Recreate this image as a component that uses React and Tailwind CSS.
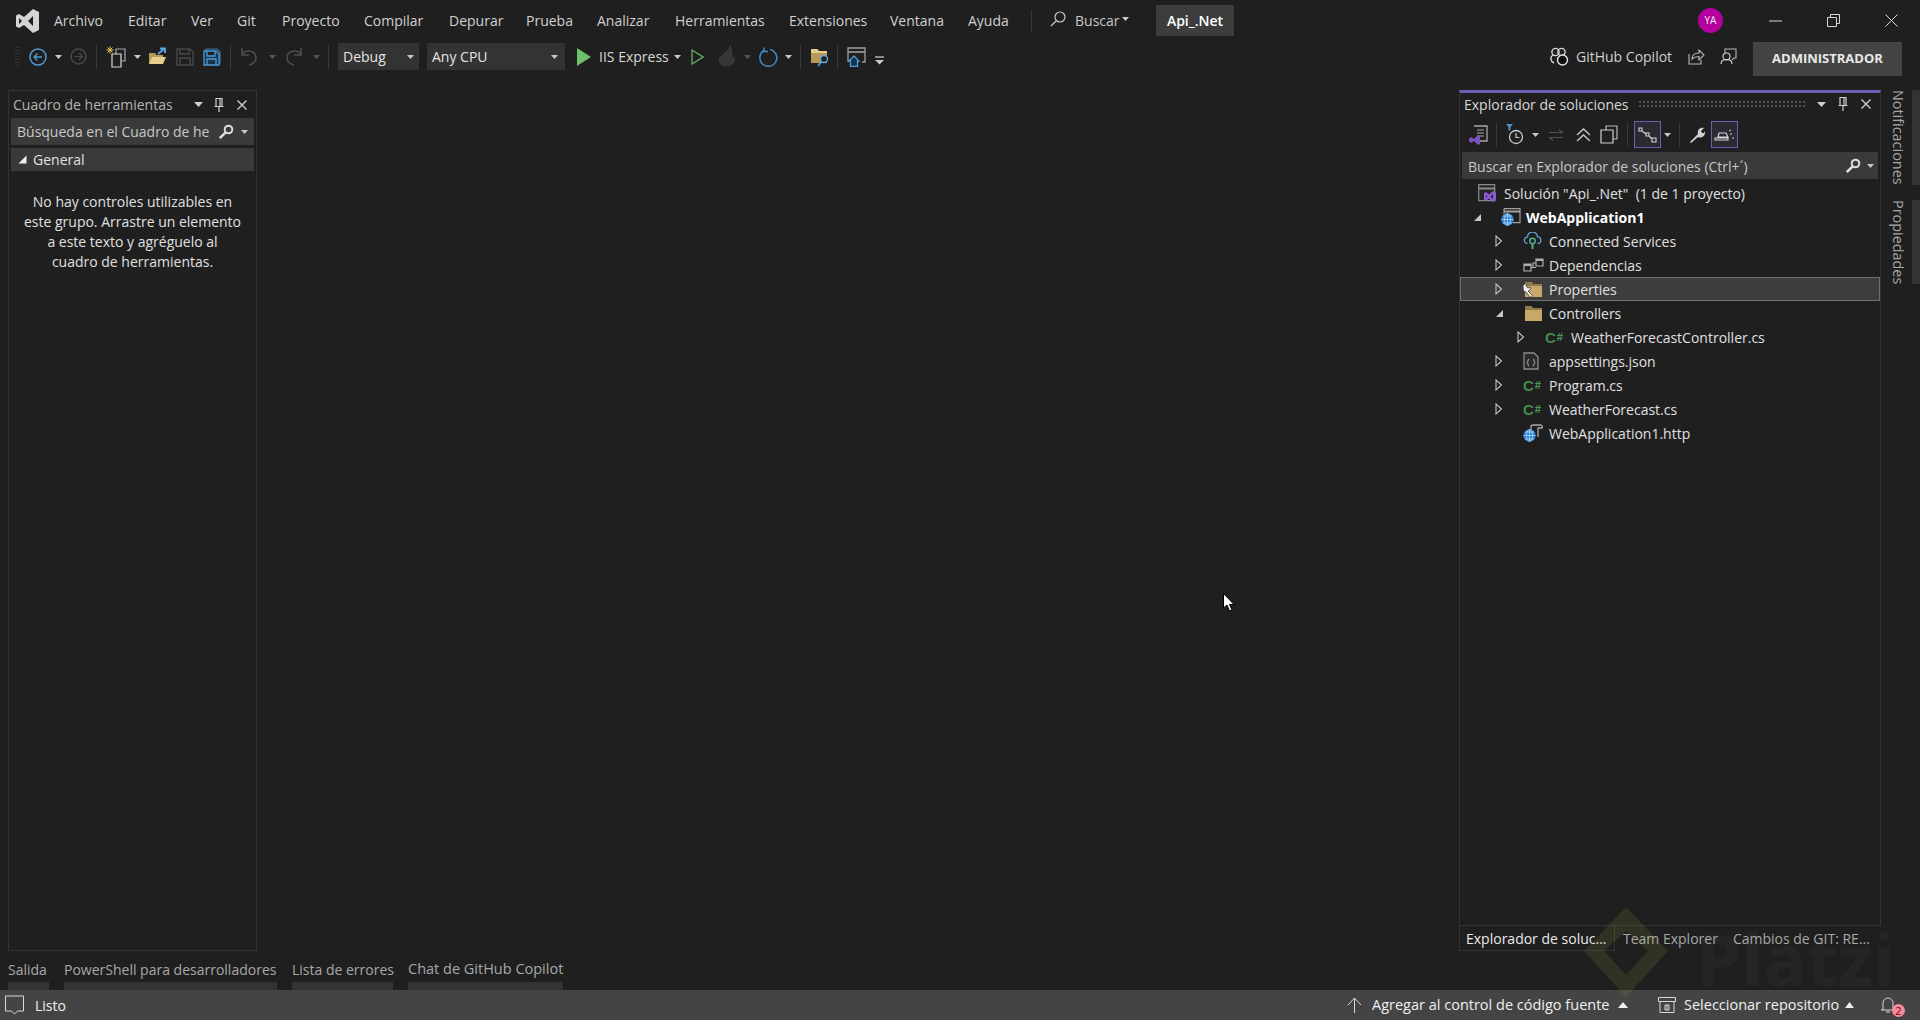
const menuItems = [
  ['Archivo', 'w-[74px]'],
  ['Editar', 'w-[63px]'],
  ['Ver', 'w-[46px]'],
  ['Git', 'w-[45px]'],
  ['Proyecto', 'w-[82px]'],
  ['Compilar', 'w-[85px]'],
  ['Depurar', 'w-[77px]'],
  ['Prueba', 'w-[71px]'],
  ['Analizar', 'w-[78px]'],
  ['Herramientas', 'w-[114px]'],
  ['Extensiones', 'w-[101px]'],
  ['Ventana', 'w-[78px]'],
  ['Ayuda', 'w-[70px]']
]

const outputTabs = [
  { label: 'Salida', w: 'w-[41px]', text: 'text-[14px]' },
  { label: 'PowerShell para desarrolladores', w: 'w-[213px]', text: 'text-[14px]' },
  { label: 'Lista de errores', w: 'w-[101px]', text: 'text-[14px]' },
  { label: 'Chat de GitHub Copilot', w: 'w-[155px]', text: 'text-[14.5px]' }
]

function Caret({ className = '', color = '#c8c8c8' }) {
  return (
    <svg width="7" height="4" viewBox="0 0 7 4" className={`shrink-0 ${className}`}>
      <path d="M0 0h7L3.500 4Z" fill={color} />
    </svg>
  )
}

function Sep({ className = '' }) {
  return <span className={`w-px h-[24px] bg-[#3a3a3a] shrink-0 ${className}`} />
}

function CloseX({ className = '' }) {
  return (
    <svg width="10" height="10" viewBox="0 0 10 10" className={className}>
      <path d="M0.5 0.5 9.5 9.5M9.5 0.5 0.5 9.5" stroke="#d0d0d0" strokeWidth="1.4" />
    </svg>
  )
}

function Pin({ className = '' }) {
  return (
    <svg width="10" height="14" viewBox="0 0 10 14" className={className}>
      <path d="M2 .5h6v8H2zM.5 8.500h9M5 8.500V14M6 1v7" fill="none" stroke="#d0d0d0" strokeWidth="1.2" />
    </svg>
  )
}

function DropDown({ className = '' }) {
  return (
    <svg width="9" height="5" viewBox="0 0 9 5" className={className}>
      <path d="M0 0h9L4.500 5Z" fill="#d0d0d0" />
    </svg>
  )
}

function SearchGlyph({ className = '' }) {
  return (
    <svg width="16" height="16" viewBox="0 0 16 16" className={className}>
      <circle cx="10.500" cy="5.500" r="3.800" fill="none" stroke="#dedede" strokeWidth="2" />
      <path d="M7.700 8.300 1.800 14.200" stroke="#dedede" strokeWidth="2.600" />
    </svg>
  )
}

function Expander({ open }) {
  if (open) {
    return (
      <svg width="9" height="9" viewBox="0 0 9 9">
        <path d="M8 1V8H1Z" fill="#c8c8c8" />
      </svg>
    )
  }
  return (
    <svg width="8" height="12" viewBox="0 0 8 12">
      <path d="M1 1 6.500 6 1 11Z" fill="none" stroke="#c0c0c0" strokeWidth="1.100" />
    </svg>
  )
}

function CSharp() {
  return (
    <span className="font-['Liberation_Sans',sans-serif] text-[15px] font-bold text-[#3f8f4c] tracking-[1px] leading-none">
      C<span className="text-[11px] align-[2px] text-[#4e9a58]">#</span>
    </span>
  )
}

function FolderIcon({ wrench }) {
  return (
    <svg width="20" height="18" viewBox="0 0 20 18">
      <path d="M2 2h6l2 2h9v13H2Z" fill="#c8a868" />
      <path d="M2 2h6l2 2h9v2H2Z" fill="#8f7a4c" />
      {wrench && <path d="M0 7c0-2 2-4 4-3L3 6l2 2 2-1c1 2 0 4-2 4l4 4c1 1-1 3-2 2l-4-5C1 12 0 10 0 7Z" fill="#ececec" stroke="#2a2a2a" strokeWidth=".7" />}
    </svg>
  )
}

function GlobeBadge({ className = '' }) {
  return (
    <svg width="13" height="13" viewBox="0 0 13 13" className={className}>
      <circle cx="6.500" cy="6.500" r="6.200" fill="#2a80cf" />
      <path d="M.5 6.500h12M6.500.5v12M2 3h9M2 10h9" stroke="#bfe0fa" strokeWidth=".7" />
      <ellipse cx="6.500" cy="6.500" rx="3" ry="6" fill="none" stroke="#bfe0fa" strokeWidth=".7" />
    </svg>
  )
}

function TreeIcon({ kind }) {
  if (kind === 'solution') {
    return (
      <svg width="19" height="18" viewBox="0 0 19 18">
        <path d="M.7.7h16v16H.7z" fill="#262626" stroke="#8a8a8a" strokeWidth="1.200" />
        <path d="M1 4.500h16" stroke="#8a8a8a" strokeWidth="2" />
        <path d="M6 9l2-1 3 2.500L15 7l3 1.500v8L15 18l-4-3.500L8 17l-2-1Zm2 2.500v2l1.500-1Zm7-1.500-2.500 2.500L15 15Z" fill="#8a5bd1" />
      </svg>
    )
  }
  if (kind === 'project') {
    return (
      <span className="relative inline-block w-[20px] h-[18px]">
        <svg width="20" height="16" viewBox="0 0 20 16" className="absolute left-0 top-0">
          <path d="M3 .7h16v14H12M3 6V.7" fill="none" stroke="#a0a0a0" strokeWidth="1.200" />
          <path d="M3 3.500h16" stroke="#a0a0a0" strokeWidth="2" />
        </svg>
        <GlobeBadge className="absolute left-0 bottom-0" />
      </span>
    )
  }
  if (kind === 'connected') {
    return (
      <svg width="19" height="18" viewBox="0 0 19 18">
        <path d="M4.500 11.500a3.200 3.200 0 0 1 0-6.400 5 5 0 0 1 10-.2 3.300 3.300 0 0 1 0 6.600" fill="none" stroke="#5a9ccc" strokeWidth="1.400" />
        <circle cx="9.500" cy="9" r="2.700" fill="none" stroke="#4eb089" strokeWidth="1.500" />
        <path d="M9.500 12v5" stroke="#4eb089" strokeWidth="2" />
      </svg>
    )
  }
  if (kind === 'deps') {
    return (
      <svg width="21" height="15" viewBox="0 0 21 15">
        <path d="M1 6h7v7H1zM13 1h7v7h-7zM8 9.500h5M13 5H10v4" fill="none" stroke="#b0b0b0" strokeWidth="1.200" />
        <path d="M13 1h7v2h-7zM1 6h7v2H1z" fill="#b0b0b0" />
      </svg>
    )
  }
  if (kind === 'properties') return <FolderIcon wrench />
  if (kind === 'folder') return <FolderIcon />
  if (kind === 'cs') return <CSharp />
  if (kind === 'json') {
    return (
      <svg width="16" height="18" viewBox="0 0 16 18">
        <path d="M1 1h10l4 4v12H1Z" fill="#2a2a2a" stroke="#8a8a8a" strokeWidth="1.300" />
        <path d="M6 7C4.500 7 5.500 10 4 10.500 5.500 11 4.500 14 6 14M10 7c1.500 0 .5 3 2 3.500-1.500.5-.5 3.500-2 3.500" fill="none" stroke="#c0c0c0" strokeWidth="1" />
      </svg>
    )
  }
  if (kind === 'http') {
    return (
      <span className="relative inline-block w-[20px] h-[18px]">
        <svg width="16" height="14" viewBox="0 0 16 14" className="absolute right-0 top-0">
          <path d="M4 13V3a2 2 0 0 1 2-2h8a2 2 0 0 1 1 3h-4v9" fill="none" stroke="#a8a8a8" strokeWidth="1.300" />
        </svg>
        <GlobeBadge className="absolute left-0 bottom-0" />
      </span>
    )
  }
  return null
}

const treeRows = [
  { label: 'Solución "Api_.Net"  (1 de 1 proyecto)', icon: 'solution', pad: 'pl-[18px]', slot: 'w-[26px]' },
  { label: 'WebApplication1', icon: 'project', pad: 'pl-[13px]', exp: 'open', bold: true },
  { label: 'Connected Services', icon: 'connected', pad: 'pl-[35px]', exp: 'closed', slot: 'w-[26px]' },
  { label: 'Dependencias', icon: 'deps', pad: 'pl-[35px]', exp: 'closed', slot: 'w-[26px]' },
  { label: 'Properties', icon: 'properties', pad: 'pl-[35px]', exp: 'closed', selected: true, slot: 'w-[26px]' },
  { label: 'Controllers', icon: 'folder', pad: 'pl-[35px]', exp: 'open', slot: 'w-[26px]' },
  { label: 'WeatherForecastController.cs', icon: 'cs', pad: 'pl-[57px]', exp: 'closed', slot: 'w-[26px]' },
  { label: 'appsettings.json', icon: 'json', pad: 'pl-[35px]', exp: 'closed', slot: 'w-[26px]' },
  { label: 'Program.cs', icon: 'cs', pad: 'pl-[35px]', exp: 'closed', slot: 'w-[26px]' },
  { label: 'WeatherForecast.cs', icon: 'cs', pad: 'pl-[35px]', exp: 'closed', slot: 'w-[26px]' },
  { label: 'WebApplication1.http', icon: 'http', pad: 'pl-[35px]', slot: 'w-[26px]' }
]

function TreeRow({ row }) {
  return (
    <div className={`h-6 flex items-center whitespace-pre ${row.pad} ${row.selected ? 'bg-[#3d3d3d] outline outline-1 -outline-offset-1 outline-[#707070]' : ''}`}>
      {row.icon !== 'solution' && (
        <span className="w-[28px] flex items-center">
          {row.exp === 'open' && <Expander open />}
          {row.exp === 'closed' && <Expander />}
        </span>
      )}
      <span className={`${row.slot || 'w-[25px]'} flex items-center`}>
        <TreeIcon kind={row.icon} />
      </span>
      <span className={row.bold ? 'font-bold text-white' : 'text-[#e0e0e0]'}>{row.label}</span>
    </div>
  )
}

function TitleBar() {
  return (
    <div className="h-[41px] flex items-center shrink-0">
      <svg width="26" height="26" viewBox="0 0 26 26" className="ml-[14px] mr-[14px]">
        <path d="M19 1 25 4v18l-6 3-9-8-5 3-3-1.500V7.500L5 6l5 3Zm0 7-5 5 5 5ZM5 10v6l3-3Z" fill="#d4d4d4" />
      </svg>
      {menuItems.map(([name, w]) => (
        <span key={name} className={`${w} text-[#d0d0d0]`}>{name}</span>
      ))}
      <span className="w-px h-[22px] bg-[#3a3a3a] -ml-[7px]" />
      <svg width="16" height="16" viewBox="0 0 16 16" className="ml-[18px] mb-[3px]">
        <circle cx="10" cy="6" r="5" fill="none" stroke="#c8c8c8" strokeWidth="1.200" />
        <path d="M6.500 9.500 1 15" stroke="#c8c8c8" strokeWidth="1.200" />
      </svg>
      <span className="ml-[9px] w-[43px] text-[#c8c8c8]">Buscar</span>
      <Caret className="ml-[4px] mb-[3px]" />
      <span className="ml-[27px] w-[78px] h-[31px] flex items-center justify-center bg-[#3d3d3d] text-white font-semibold text-[14px]">Api_.Net</span>
      <span className="ml-auto w-[25px] h-[25px] rounded-full bg-[#b4009e] text-[#f0f0f0] text-[10px] flex items-center justify-center">YA</span>
      <svg width="13" height="2" viewBox="0 0 13 2" className="ml-[46px]"><path d="M0 1h13" stroke="#d8d8d8" /></svg>
      <svg width="13" height="13" viewBox="0 0 13 13" className="ml-[45px]">
        <path d="M.5 3.500h9v9h-9zM3.500 3.500v-3h9v9h-3" fill="none" stroke="#d8d8d8" />
      </svg>
      <svg width="13" height="13" viewBox="0 0 13 13" className="ml-[45px] mr-[22px]">
        <path d="M.5.500l12 12M12.500.500l-12 12" stroke="#d8d8d8" />
      </svg>
    </div>
  )
}

function Toolbar() {
  return (
    <div className="h-[32px] pb-[1px] flex items-center shrink-0">
      <svg width="5" height="24" viewBox="0 0 5 24" className="ml-[15px]">
        <path d="M1 2v21M4 2v21" stroke="#4a4a4a" strokeDasharray="1 2" />
      </svg>
      <svg width="18" height="18" viewBox="0 0 18 18" className="ml-[9px]">
        <circle cx="9" cy="9" r="8" fill="none" stroke="#4f9bd4" strokeWidth="1.500" />
        <path d="M13 9H5.500M8.500 5.500 5 9l3.500 3.500" fill="none" stroke="#4f9bd4" strokeWidth="1.300" />
      </svg>
      <Caret className="ml-[8px]" />
      <svg width="17" height="17" viewBox="0 0 17 17" className="ml-[8px]">
        <circle cx="8.500" cy="8.500" r="7.500" fill="none" stroke="#4a4a4a" strokeWidth="1.400" />
        <path d="M4.500 8.500h7.500M9 5l3.500 3.500L9 12" fill="none" stroke="#4a4a4a" strokeWidth="1.200" />
      </svg>
      <Sep className="ml-[9px]" />
      <svg width="20" height="22" viewBox="0 0 20 22" className="ml-[9px]">
        <path d="M4 .5v7M.5 4h7M1.500 1.500l5 5M6.500 1.500l-5 5" stroke="#e0c050" strokeWidth="1" />
        <path d="M10 3h9v12h-9z" fill="none" stroke="#a8a8a8" strokeWidth="1.200" />
        <path d="M6 8h9v13H6z" fill="#1f1f1f" stroke="#d8d8d8" strokeWidth="1.200" />
      </svg>
      <Caret className="ml-[8px]" />
      <svg width="19" height="19" viewBox="0 0 19 19" className="ml-[7px]">
        <path d="M1 6h6l1.500 2H15v9H1Z" fill="#b89a58" />
        <path d="M1 17 4 10h14l-3 7Z" fill="#e6cd8c" />
        <path d="M10 7 16 2M12 1.500h5V6" fill="none" stroke="#5aa7de" strokeWidth="1.800" />
      </svg>
      <svg width="18" height="18" viewBox="0 0 18 18" className="ml-[9px]">
        <path d="M1 1h13l3 3v13H1ZM4 1v5h9V1M4 17v-7h10v7" fill="none" stroke="#4a4a4a" strokeWidth="1.300" />
      </svg>
      <svg width="18" height="18" viewBox="0 0 18 18" className="ml-[9px]">
        <path d="M3 3V1h11l3 3v11h-1" fill="none" stroke="#3a78a8" strokeWidth="1.200" />
        <path d="M1 3h12l3 3v11H1ZM4 3v5h8V3M4 17v-6h9v6" fill="#16344c" stroke="#4f9bd4" strokeWidth="1.300" />
      </svg>
      <Sep className="ml-[9px]" />
      <svg width="17" height="19" viewBox="0 0 17 19" className="ml-[10px]">
        <path d="M1 1v7h7M1 8c3-6 14-5 14 3 0 4-3 6-7 7" fill="none" stroke="#4e4e4e" strokeWidth="1.500" />
      </svg>
      <Caret className="ml-[11px]" color="#555" />
      <svg width="16" height="19" viewBox="0 0 16 19" className="ml-[10px]">
        <path d="M15 1v7H8M15 8C12 2 1 3 1 11c0 4 3 6 7 7" fill="none" stroke="#4e4e4e" strokeWidth="1.500" />
      </svg>
      <Caret className="ml-[11px]" color="#555" />
      <Sep className="ml-[8px]" />
      <span className="ml-[9px] w-[81px] h-[27px] pl-[5px] bg-[#333333] text-[#e4e4e4] flex items-center">
        Debug
        <Caret className="ml-auto mr-[5px]" />
      </span>
      <span className="ml-[8px] w-[138px] h-[27px] pl-[5px] bg-[#333333] text-[#e4e4e4] flex items-center">
        Any CPU
        <Caret className="ml-auto mr-[7px]" />
      </span>
      <svg width="14" height="18" viewBox="0 0 14 18" className="ml-[12px]"><path d="M0 0 14 9 0 18Z" fill="#6cc06c" /></svg>
      <span className="ml-[8px] w-[70px] whitespace-nowrap text-[#d8d8d8]">IIS Express</span>
      <Caret className="ml-[5px]" />
      <svg width="13" height="16" viewBox="0 0 13 16" className="ml-[10px]"><path d="M1 1 12 8 1 15Z" fill="none" stroke="#62b062" strokeWidth="1.300" /></svg>
      <svg width="18" height="21" viewBox="0 0 18 21" className="ml-[14px]">
        <path d="M12 0C12 5 5 7 2 12c-2 4 1 8 6 8 6 0 9-4 8-9-1 2-2 3-3 3 1-5 1-10-1-14Z" fill="#363636" stroke="#404040" />
      </svg>
      <Caret className="ml-[8px]" color="#555" />
      <svg width="19" height="20" viewBox="0 0 19 20" className="ml-[8px]">
        <path d="M5 3.500A8.500 8.500 0 1 0 11 2.500M5 .5v4h4" fill="none" stroke="#3f8ac4" strokeWidth="1.500" />
      </svg>
      <Caret className="ml-[7px]" />
      <Sep className="ml-[8px]" />
      <svg width="20" height="20" viewBox="0 0 20 20" className="ml-[9px]">
        <path d="M1 2h6l2 2h8v12H1Z" fill="#b89a58" />
        <path d="M1 2h6l2 2h8v2H1Z" fill="#e6cd8c" />
        <circle cx="14" cy="12" r="3.500" fill="#1f1f1f" stroke="#5aa7de" strokeWidth="1.400" />
        <path d="M11.500 14.500 8 19" stroke="#5aa7de" strokeWidth="1.600" />
      </svg>
      <Sep className="ml-[7px]" />
      <svg width="19" height="20" viewBox="0 0 19 20" className="ml-[9px]">
        <path d="M4 14H1V1h17v14h-3" fill="none" stroke="#a0a0a0" strokeWidth="1.300" />
        <path d="M1 5h17" stroke="#a0a0a0" strokeWidth="1.600" />
        <path d="M2 14l5-5 5 5h-1.500v5.500h-7V14Z" fill="#16344c" stroke="#4f9bd4" strokeWidth="1.300" />
      </svg>
      <svg width="9" height="9" viewBox="0 0 9 9" className="ml-[9px] mt-[8px]">
        <path d="M0 1h9" stroke="#c8c8c8" strokeWidth="1.300" />
        <path d="M0 4h9L4.500 8.500Z" fill="#c8c8c8" />
      </svg>
      <svg width="19" height="19" viewBox="0 0 19 19" className="ml-auto">
        <circle cx="5.500" cy="5" r="3.600" fill="none" stroke="#d8d8d8" strokeWidth="1.400" />
        <circle cx="11.500" cy="5" r="3.600" fill="none" stroke="#d8d8d8" strokeWidth="1.400" />
        <path d="M3 8c-3 2-3 6 1 8" fill="none" stroke="#d8d8d8" strokeWidth="1.400" />
        <circle cx="12.500" cy="13" r="5" fill="#111" stroke="#e4e4e4" strokeWidth="1.400" />
      </svg>
      <span className="ml-[7px] w-[100px] whitespace-nowrap text-[#d0d0d0]">GitHub Copilot</span>
      <svg width="17" height="17" viewBox="0 0 17 17" className="ml-[12px]">
        <path d="M1 6v10h12v-4M4 11c0-4 3-6 7-6V2l5 5-5 5V8.500C8 8.500 6 9 4 11Z" fill="none" stroke="#b8b8b8" strokeWidth="1.100" />
      </svg>
      <svg width="17" height="17" viewBox="0 0 17 17" className="ml-[15px]">
        <path d="M5 5V1h11v9h-2l-2 2" fill="none" stroke="#b8b8b8" strokeWidth="1.100" />
        <circle cx="6.500" cy="8.500" r="3.500" fill="#1f1f1f" stroke="#d8d8d8" strokeWidth="1.100" />
        <path d="M1 16c0-3 2-4.500 5.500-4.500S12 13 12 16" fill="none" stroke="#d8d8d8" strokeWidth="1.100" />
      </svg>
      <span className="ml-[16px] mt-[5px] w-[149px] h-[34px] bg-[#444444] text-[#e8e8e8] text-[13px] font-bold flex items-center justify-center">ADMINISTRADOR</span>
      <span className="w-[18px]" />
    </div>
  )
}

function ToolboxPanel() {
  return (
    <div className="ml-2 w-[249px] border border-[#333333] flex flex-col text-[#e0e0e0] shrink-0">
      <div className="h-[27px] flex items-center pl-[4px] text-[#b4b4b4]">
        Cuadro de herramientas
        <DropDown className="ml-auto" />
        <Pin className="ml-[11px]" />
        <CloseX className="ml-[13px] mr-[9px]" />
      </div>
      <div className="mx-[2px] h-[27px] bg-[#3a3a3a] flex items-center pl-[6px] text-[#c8c8c8]">
        <span className="w-[199px] whitespace-nowrap">Búsqueda en el Cuadro de he</span>
        <SearchGlyph className="ml-[2px]" />
        <Caret className="ml-[7px]" />
      </div>
      <div className="mt-[3px] mx-[2px] h-[23px] bg-[#3a3a3a] flex items-center pl-[7px]">
        <svg width="9" height="9" viewBox="0 0 9 9"><path d="M8.500.5V8.500H.5Z" fill="#f0f0f0" /></svg>
        <span className="ml-[6px]">General</span>
      </div>
      <p className="mt-[21px] text-center leading-[20px] whitespace-nowrap">
        No hay controles utilizables en<br />
        este grupo. Arrastre un elemento<br />
        a este texto y agréguelo al<br />
        cuadro de herramientas.
      </p>
    </div>
  )
}

function SolutionToolbar() {
  const boxed = 'w-[27px] h-[27px] border border-[#6b5fb5] bg-[#2b2a33] flex items-center justify-center shrink-0'
  return (
    <div className="h-[35px] flex items-center pl-[8px] shrink-0">
      <svg width="20" height="20" viewBox="0 0 20 20">
        <path d="M6 1h13v15H9" fill="none" stroke="#a8a8a8" strokeWidth="1.300" />
        <path d="M9 5h7M9 8h7M9 11h7" stroke="#a8a8a8" />
        <path d="M1 14l2-2 3 2 4-4 2 1v8l-2 1-4-4-3 2-2-2Z" fill="#7c52bf" />
      </svg>
      <Sep className="ml-[8px]" />
      <svg width="18" height="21" viewBox="0 0 18 21" className="ml-[9px]">
        <path d="M0 0h7L4.500 3v3L2.500 7V3Z" fill="#4f93c8" />
        <circle cx="10" cy="13" r="6.500" fill="none" stroke="#c8c8c8" strokeWidth="1.300" />
        <path d="M10 9v4.500h3.500" fill="none" stroke="#c8c8c8" strokeWidth="1.200" />
      </svg>
      <Caret className="ml-[8px]" />
      <svg width="16" height="12" viewBox="0 0 16 12" className="ml-[9px]">
        <path d="M1 3.500h14M11 .5l3.500 3M15 8.500H1M5 11.500l-3.500-3" fill="none" stroke="#505050" strokeWidth="1.200" />
      </svg>
      <svg width="15" height="14" viewBox="0 0 15 14" className="ml-[12px]">
        <path d="M1 7 7.500 1 14 7M1 13l6.500-6L14 13" fill="none" stroke="#c8c8c8" strokeWidth="1.300" />
      </svg>
      <svg width="18" height="19" viewBox="0 0 18 19" className="ml-[9px]">
        <path d="M6 5V1h11v13h-4" fill="none" stroke="#b8b8b8" strokeWidth="1.200" />
        <path d="M1 5h12v13H1z" fill="none" stroke="#d0d0d0" strokeWidth="1.200" />
      </svg>
      <Sep className="ml-[9px]" />
      <span className={`ml-[6px] ${boxed}`}>
        <svg width="19" height="16" viewBox="0 0 19 16">
          <path d="M1 1h3v3H1zM8 6h3v3H8zM14 11h4v4h-4zM4 4l4 3M11 9l3 3" fill="none" stroke="#d8d8d8" strokeWidth="1.100" />
        </svg>
      </span>
      <Caret className="ml-[3px]" />
      <Sep className="ml-[8px]" />
      <svg width="18" height="18" viewBox="0 0 18 18" className="ml-[8px]">
        <path d="M2 16 10 8C9 4 12 1 16 2l-3 3 1 2 2 0 1-2c1 4-3 8-7 6l-7 6Z" fill="#d0d0d0" />
      </svg>
      <span className={`ml-[5px] ${boxed}`}>
        <svg width="21" height="13" viewBox="0 0 21 13">
          <path d="M1 12h13v-2H1ZM4 9l1-4h7l2 4Z" fill="none" stroke="#d8d8d8" strokeWidth="1.100" />
          <path d="M16 6h2M15 3l2-1M18 10h2" stroke="#d8d8d8" />
        </svg>
      </span>
    </div>
  )
}

function SolutionPanel() {
  return (
    <div className="ml-auto w-[422px] flex flex-col shrink-0">
      <div className="flex-1 border border-[#333333] border-t-[3px] border-t-[#6b5fb5] flex flex-col min-h-0">
        <div className="h-[24px] pb-[2px] flex items-center pl-[4px] text-[#d8d8d8] shrink-0">
          Explorador de soluciones
          <span className="ml-[9px] w-[168px] h-[8px] bg-[radial-gradient(#505050_1px,transparent_1px)] bg-[length:4px_4px]" />
          <DropDown className="ml-auto" />
          <Pin className="ml-[12px]" />
          <CloseX className="ml-[13px] mr-[9px]" />
        </div>
        <SolutionToolbar />
        <div className="mx-[2px] h-[27px] pt-[1px] bg-[#3a3a3a] flex items-center pl-[6px] text-[#c8c8c8] shrink-0">
          Buscar en Explorador de soluciones (Ctrl+´)
          <SearchGlyph className="ml-auto" />
          <Caret className="ml-[6px] mr-[4px]" />
        </div>
        <div className="mt-[2px]">
          {treeRows.map(row => <TreeRow key={row.label} row={row} />)}
        </div>
      </div>
      <div className="h-[25px] flex items-center shrink-0">
        <span className="w-[156px] h-full border border-t-0 border-[#333333] pl-[6px] flex items-center text-[#e8e8e8] whitespace-nowrap">Explorador de soluc...</span>
        <span className="ml-[8px] text-[#a8a8a8]">Team Explorer</span>
        <span className="ml-[15px] text-[#a8a8a8]">Cambios de GIT: RE...</span>
      </div>
    </div>
  )
}

function VerticalTabs() {
  return (
    <div className="w-[39px] flex flex-col shrink-0 text-[#a8a8a8] text-[14.4px]">
      <div className="flex justify-between h-[95px]">
        <span className="ml-[8px] [writing-mode:vertical-rl] leading-[18px]">Notificaciones</span>
        <span className="w-[8px] bg-[#333333]" />
      </div>
      <div className="flex justify-between h-[84px] mt-[15px]">
        <span className="ml-[8px] [writing-mode:vertical-rl] leading-[18px]">Propiedades</span>
        <span className="w-[8px] bg-[#333333]" />
      </div>
    </div>
  )
}

function OutputTabs() {
  return (
    <div className="h-[39px] pl-2 flex gap-[15px] shrink-0 text-[#a8a8a8]">
      {outputTabs.map(t => (
        <div key={t.label} className={`flex flex-col ${t.w}`}>
          <span className={`h-[31px] pt-[5px] flex items-center whitespace-nowrap ${t.text}`}>{t.label}</span>
          <span className="h-[8px] bg-[#333333]" />
        </div>
      ))}
    </div>
  )
}

function StatusBar() {
  return (
    <div className="h-[30px] bg-[#444444] flex items-center text-[#f0f0f0] shrink-0">
      <svg width="20" height="20" viewBox="0 0 20 20" className="ml-[5px]">
        <path d="M.5 1h18v15h-6l-3 3-3-3h-6Z" fill="none" stroke="#d8d8d8" />
      </svg>
      <span className="ml-[10px]">Listo</span>
      <svg width="15" height="16" viewBox="0 0 15 16" className="ml-auto">
        <path d="M7.500 16V1M1 8l6.500-7L14 8" fill="none" stroke="#d8d8d8" />
      </svg>
      <span className="ml-[10px] w-[238px] text-[14.5px] whitespace-nowrap">Agregar al control de código fuente</span>
      <svg width="10" height="6" viewBox="0 0 10 6" className="ml-[8px]"><path d="M0 6 5 0l5 6Z" fill="#f0f0f0" /></svg>
      <svg width="18" height="16" viewBox="0 0 18 16" className="ml-[30px]">
        <path d="M.5.500h17v4H.5zM2 4.500V15.500h14V4.500M7 8h4M9 8v5M7 8v5h4V8" fill="none" stroke="#d8d8d8" />
      </svg>
      <span className="ml-[8px] w-[153px] text-[14.5px] whitespace-nowrap">Seleccionar repositorio</span>
      <svg width="9" height="6" viewBox="0 0 9 6" className="ml-[8px]"><path d="M0 6 4.500 0 9 6Z" fill="#f0f0f0" /></svg>
      <span className="relative ml-[27px] mr-[25px] w-[14px] h-[18px]">
        <svg width="14" height="18" viewBox="0 0 14 18">
          <path d="M2 14V7a5 5 0 0 1 10 0v7M0 14h14M5 16h4" fill="none" stroke="#d8d8d8" />
        </svg>
        <span className="absolute -right-[10px] -bottom-[3px] w-[13px] h-[13px] rounded-full bg-[#f48a9a] text-[#6b1020] text-[11px] leading-[13px] text-center">2</span>
      </span>
    </div>
  )
}

export default function App() {
  return (
    <div className="relative w-[1920px] h-[1020px] overflow-hidden bg-[#1f1f1f] flex flex-col font-['Open_Sans','Noto_Sans',sans-serif] text-[14px]">
      <TitleBar />
      <Toolbar />
      <div className="flex-1 flex pt-[17px] min-h-0">
        <ToolboxPanel />
        <SolutionPanel />
        <VerticalTabs />
      </div>
      <OutputTabs />
      <StatusBar />

      {/* platzi watermark sits on top of everything */}
      <svg width="92" height="98" viewBox="0 0 92 98" className="absolute left-[1580px] top-[903px] opacity-[0.12] pointer-events-none">
        <path d="M46 4 88 48 46 94 4 48ZM46 28 24 48 46 72 68 48Z" fill="#a8bd4a" fillRule="evenodd" />
      </svg>
      <span className="absolute left-[1696px] top-[922px] text-[72px] font-bold text-white opacity-[0.025] leading-none pointer-events-none">Platzi</span>

      {/* mouse cursor */}
      <svg width="12" height="19" viewBox="0 0 12 19" className="absolute left-[1223px] top-[593px]">
        <path d="M.5.5V15l3.500-3 2.500 6 2.500-1-2.500-5.500H11Z" fill="#fff" stroke="#000" />
      </svg>
    </div>
  )
}
